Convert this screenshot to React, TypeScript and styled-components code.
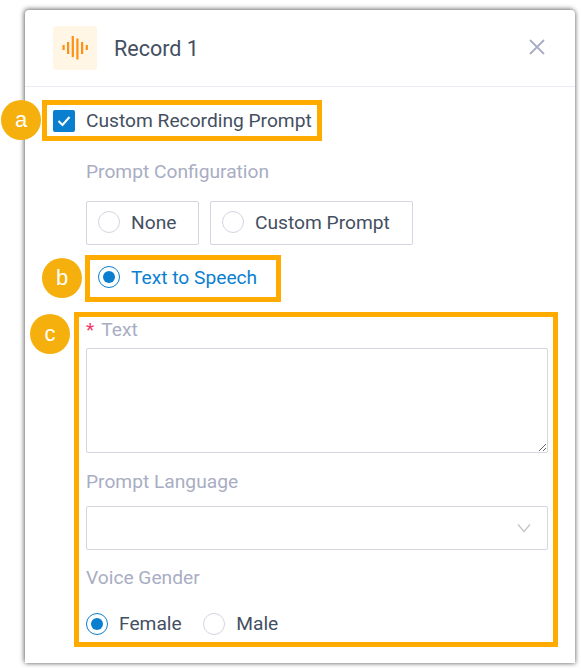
import React from 'react'
import styled, { createGlobalStyle } from 'styled-components'

const GlobalStyle = createGlobalStyle`
  html, body {
    margin: 0;
    padding: 0;
    background: #ffffff;
    font-family: Roboto, "Liberation Sans", Arial, sans-serif;
  }
`;

const Page = styled.div`
  width: 581px;
  height: 669px;
  box-sizing: border-box;
  padding: 10px 6px 6px 25px;
  overflow: hidden;
`;

const Panel = styled.div`
  width: 550px;
  height: 653px;
  background: #ffffff;
  border-radius: 4px 4px 0 0;
  box-shadow: -1px -1px 5px rgba(0, 0, 0, 0.5), 1px 1px 4px rgba(0, 0, 0, 0.3);
`;

const Header = styled.div`
  height: 77px;
  box-sizing: border-box;
  padding: 0 30px 0 28px;
  display: flex;
  align-items: center;
  gap: 17px;
  border-bottom: 1px solid #ecebf3;
`;

const IconTile = styled.div`
  width: 44px;
  height: 44px;
  border-radius: 3px;
  background: #fff6e5;
  flex: none;
`;

const Title = styled.div`
  flex: 1;
  margin-top: 2px;
  font-size: 21.5px;
  line-height: 28px;
  color: #444f62;
`;

const CloseIcon = styled.svg`
  width: 16px;
  height: 16px;
  flex: none;
  margin-top: -2px;
`;

const Body = styled.div`
  padding: 23px 27px 0 28px;
`;

const CheckRow = styled.div`
  position: relative;
  display: flex;
  align-items: center;
  gap: 11px;
  height: 22px;
  font-size: 19.2px;
  color: #444f62;
`;

const CheckBox = styled.span`
  width: 22px;
  height: 22px;
  border-radius: 2px;
  background: #0a7fd0;
  flex: none;
  display: flex;
  align-items: center;
  justify-content: center;
`;

const RaisedText = styled.span`
  margin-bottom: 2px;
`;

const Section = styled.div`
  padding-left: 33px;
`;

const FieldLabel = styled.div<{ $top: number }>`
  margin-top: ${p => p.$top}px;
  height: 22px;
  line-height: 22px;
  font-size: 19.2px;
  color: #a9adc3;
`;

const Required = styled.span`
  color: #f5386a;
  margin-right: 7px;
`;

const OptionRow = styled.div`
  margin-top: 18px;
  display: flex;
  gap: 11px;
`;

const OptionBox = styled.div<{ $width: number }>`
  width: ${p => p.$width}px;
  height: 44px;
  box-sizing: border-box;
  border: 1px solid #d5d5e2;
  border-radius: 2px;
  padding: 0 0 2px 11px;
  display: flex;
  align-items: center;
`;

const Option = styled.div<{ $active?: boolean }>`
  display: flex;
  align-items: center;
  gap: 11px;
  height: 22px;
  font-size: 19.2px;
  color: ${p => (p.$active ? '#0a7fd0' : '#444f62')};
`;

const Radio = styled.span<{ $on?: boolean }>`
  width: 22px;
  height: 22px;
  box-sizing: border-box;
  border-radius: 50%;
  border: 1px solid ${p => (p.$on ? '#0a7fd0' : '#d5d5e2')};
  background: #ffffff;
  flex: none;
  display: flex;
  align-items: center;
  justify-content: center;

  &::after {
    content: '';
    display: ${p => (p.$on ? 'block' : 'none')};
    width: 12px;
    height: 12px;
    border-radius: 50%;
    background: #0a7fd0;
  }
`;

const SpeechRow = styled.div`
  position: relative;
  margin-top: 21px;
  padding-left: 12px;
`;

const TextGroup = styled.div`
  position: relative;
  margin-top: 31px;
`;

const FirstLabel = styled(FieldLabel)`
  margin-top: 0;
`;

const TextArea = styled.textarea`
  display: block;
  width: 100%;
  height: 105px;
  margin: 7px 0 0;
  box-sizing: border-box;
  border: 1px solid #d5d5e2;
  border-radius: 2px;
  background: #ffffff;
  outline: none;
`;

const SelectBox = styled.div`
  margin-top: 13px;
  height: 44px;
  box-sizing: border-box;
  border: 1px solid #d5d5e2;
  border-radius: 2px;
  padding-right: 16px;
  display: flex;
  align-items: center;
  justify-content: flex-end;
`;

const Chevron = styled.svg`
  width: 14px;
  height: 10px;
`;

const GenderRow = styled.div`
  margin-top: 24px;
  display: flex;
  gap: 21.5px;
`;

/* annotation frames and badges sit over the form */
const Frame = styled.div<{ $l: number; $t: number; $r: number; $b: number }>`
  position: absolute;
  left: ${p => p.$l}px;
  top: ${p => p.$t}px;
  right: ${p => p.$r}px;
  bottom: ${p => p.$b}px;
  border: 5px solid #ffab00;
  pointer-events: none;
`;

const Badge = styled.div<{ $l: number; $t: number }>`
  position: absolute;
  left: ${p => p.$l}px;
  top: ${p => p.$t}px;
  width: 40px;
  height: 40px;
  border-radius: 50%;
  background: #f5b00d;
  color: #ffffff;
  font-family: "Liberation Sans", Arial, sans-serif;
  font-size: 22px;
  line-height: 39px;
  text-align: center;
`;

const bars = [
  { x: 9.5, y: 19, h: 5 },
  { x: 14, y: 16, h: 12 },
  { x: 18.7, y: 10, h: 21 },
  { x: 23.3, y: 12.5, h: 21 },
  { x: 28, y: 16, h: 12 },
  { x: 32.7, y: 19, h: 5 },
];

function App() {
  return (
    <>
      <GlobalStyle />
      <Page>
        <Panel>
          <Header>
            <IconTile>
              <svg width="44" height="44" viewBox="0 0 44 44">
                {bars.map(b => (
                  <rect key={b.x} x={b.x} y={b.y} width="2.2" height={b.h} fill="#ff9014" />
                ))}
              </svg>
            </IconTile>
            <Title>Record 1</Title>
            <CloseIcon viewBox="0 0 16 16">
              <path d="M1 1 L15 15 M15 1 L1 15" stroke="#a9adc3" strokeWidth="1.8" fill="none" />
            </CloseIcon>
          </Header>
          <Body>
            <CheckRow>
              <CheckBox>
                <svg width="14" height="12" viewBox="0 0 14 12">
                  <path d="M1.5 6 L5.5 10 L12.5 2" stroke="#ffffff" strokeWidth="2" fill="none" />
                </svg>
              </CheckBox>
              <RaisedText>Custom Recording Prompt</RaisedText>
              <Frame $l={-11} $t={-10} $r={226} $b={-9} />
              <Badge $l={-52} $t={-10}>a</Badge>
            </CheckRow>
            <Section>
              <FieldLabel $top={29}>Prompt Configuration</FieldLabel>
              <OptionRow>
                <OptionBox $width={113}>
                  <Option><Radio />None</Option>
                </OptionBox>
                <OptionBox $width={203}>
                  <Option><Radio />Custom Prompt</Option>
                </OptionBox>
              </OptionRow>
              <SpeechRow>
                <Option $active><Radio $on />Text to Speech</Option>
                <Frame $l={-1} $t={-11} $r={267} $b={-14} />
                <Badge $l={-44} $t={-8}>b</Badge>
              </SpeechRow>
              <TextGroup>
                <FirstLabel $top={0}><Required>*</Required>Text</FirstLabel>
                <TextArea />
                <FieldLabel $top={18}>Prompt Language</FieldLabel>
                <SelectBox>
                  <Chevron viewBox="0 0 14 10">
                    <path d="M1 1.5 L7 8.5 L13 1.5" stroke="#c4c4c8" strokeWidth="1.3" fill="none" />
                  </Chevron>
                </SelectBox>
                <FieldLabel $top={17}>Voice Gender</FieldLabel>
                <GenderRow>
                  <Option><Radio $on /><RaisedText>Female</RaisedText></Option>
                  <Option><Radio /><RaisedText>Male</RaisedText></Option>
                </GenderRow>
                <Frame $l={-12} $t={-7} $r={-10} $b={-12} />
                <Badge $l={-56} $t={-5}>c</Badge>
              </TextGroup>
            </Section>
          </Body>
        </Panel>
      </Page>
    </>
  );
}

export default App;
